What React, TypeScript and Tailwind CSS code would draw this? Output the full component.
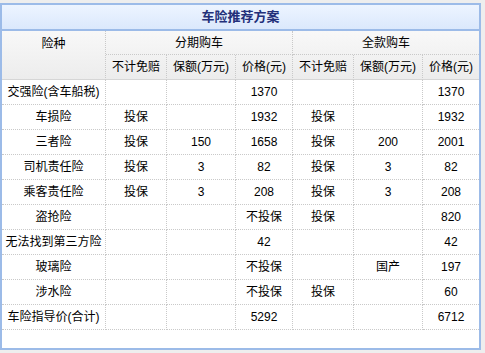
const font = { fontFamily: '"Liberation Sans", "Noto Sans CJK SC", sans-serif' };

type Row = [string, string, string, string, string, string, string];

const rows: Row[] = [
  ["交强险(含车船税)", "", "", "1370", "", "", "1370"],
  ["车损险", "投保", "", "1932", "投保", "", "1932"],
  ["三者险", "投保", "150", "1658", "投保", "200", "2001"],
  ["司机责任险", "投保", "3", "82", "投保", "3", "82"],
  ["乘客责任险", "投保", "3", "208", "投保", "3", "208"],
  ["盗抢险", "", "", "不投保", "投保", "", "820"],
  ["无法找到第三方险", "", "", "42", "", "", "42"],
  ["玻璃险", "", "", "不投保", "", "国产", "197"],
  ["涉水险", "", "", "不投保", "投保", "", "60"],
  ["车险指导价(合计)", "", "", "5292", "", "", "6712"],
];

const widths = ["w-[104px]", "w-[61px]", "w-[69px]", "w-[57px]", "w-[61px]", "w-[69px]", "w-[56px]"];

const cell = "border-b border-r border-dotted border-[#c9c9c9] text-center align-middle p-0";
const subHead = ["不计免赔", "保额(万元)", "价格(元)"];

export default function App() {
  return (
    <div className="h-[353px] w-[485px] bg-[#eeeeee] pt-[3px] text-[12px] text-black" style={font}>
      <div className="h-[347px] w-[481px] border-2 border-[#9cbbe8] bg-white">
        <div className="flex h-[26px] items-center justify-center border-b-2 border-[#9cbbe8] bg-gradient-to-b from-[#edf4ff] to-[#dbe8fc] text-[13px] font-bold text-[#23307a]">
          车险推荐方案
        </div>
        <table className="w-[477px] table-fixed border-separate border-spacing-0">
          <colgroup>
            {widths.map((w, i) => (
              <col key={i} className={w} />
            ))}
          </colgroup>
          <thead className="bg-gradient-to-b from-[#f8f8f8] to-[#ececec]">
            <tr>
              <td
                rowSpan={2}
                className="border-b border-r border-dotted border-[#c9c9c9] border-b-[#d6d6d6] p-0 pt-[4px] text-center align-top"
                style={{ borderBottomStyle: "solid" }}
              >
                险种
              </td>
              <td colSpan={3} className={`${cell} h-[24px]`}>
                分期购车
              </td>
              <td colSpan={3} className={`${cell} h-[24px] border-r-0`}>
                全款购车
              </td>
            </tr>
            <tr>
              {[...subHead, ...subHead].map((t, i) => (
                <td
                  key={i}
                  className={`h-[25px] border-b border-r border-dotted border-[#c9c9c9] border-b-[#d6d6d6] p-0 text-center align-middle ${i === 5 ? "border-r-0" : ""}`}
                  style={{ borderBottomStyle: "solid" }}
                >
                  {t}
                </td>
              ))}
            </tr>
          </thead>
          <tbody>
            {rows.map((r, ri) => (
              <tr key={ri}>
                {r.map((c, ci) => (
                  <td key={ci} className={`${cell} h-[25px] ${ci === 6 ? "border-r-0" : ""} ${ci === 0 ? "whitespace-nowrap" : ""}`}>
                    {c}
                  </td>
                ))}
              </tr>
            ))}
          </tbody>
        </table>
      </div>
    </div>
  );
}
